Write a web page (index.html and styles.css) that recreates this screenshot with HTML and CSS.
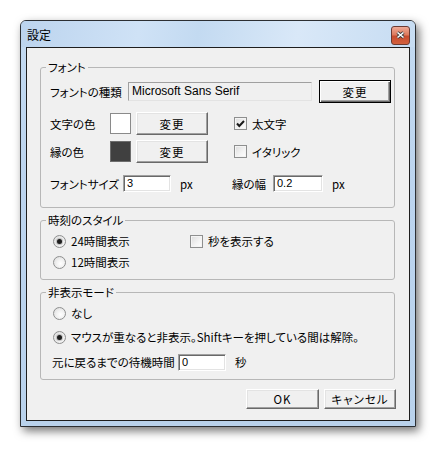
FILE: index.html
```html
<!DOCTYPE html>
<html lang="ja">
<head>
<meta charset="utf-8">
<title>設定</title>
<link rel="stylesheet" href="styles.css">
</head>
<body>
<div class="window">
  <div class="titlebar">
    <span class="title">設定</span>
    <div class="close">
      <svg width="9" height="8" viewBox="0 0 9 8"><path d="M1.5 1.5 L7.5 6.5 M7.5 1.5 L1.5 6.5" stroke="#3a3a3a" stroke-width="3.2" fill="none"/><path d="M1.5 1.5 L7.5 6.5 M7.5 1.5 L1.5 6.5" stroke="#fff" stroke-width="1.6" fill="none"/></svg>
    </div>
  </div>
  <div class="client">
    <fieldset class="group g1">
      <legend>フォント</legend>
      <div class="row r23">
        <span class="lbl w78">フォントの種類</span>
        <div class="textbox ro fontname">Microsoft Sans Serif</div>
        <div class="btn default w72 ml7">変更</div>
      </div>
      <div class="row r23 mt9">
        <div class="left w183">
          <span class="lbl w60">文字の色</span>
          <div class="swatch white"></div>
          <div class="btn w72 ml5">変更</div>
        </div>
        <span class="check on"><svg width="9" height="8" viewBox="0 0 9 8"><path d="M1 3.5 L3.3 6 L8 1" stroke="#1a1a1a" stroke-width="2" fill="none"/></svg></span>
        <span class="cap">太文字</span>
      </div>
      <div class="row r23 mt5">
        <div class="left w183">
          <span class="lbl w60">縁の色</span>
          <div class="swatch dark"></div>
          <div class="btn w72 ml5">変更</div>
        </div>
        <span class="check"></span>
        <span class="cap">イタリック</span>
      </div>
      <div class="row r23 mt9">
        <div class="left w182">
          <span class="lbl w73">フォントサイズ</span>
          <div class="textbox num w48">3</div>
          <span class="unit">px</span>
        </div>
        <span class="lbl w41">縁の幅</span>
        <div class="textbox num w50">0.2</div>
        <span class="unit">px</span>
      </div>
    </fieldset>

    <fieldset class="group g2">
      <legend>時刻のスタイル</legend>
      <div class="row r20">
        <div class="left w139">
          <span class="radio on"></span>
          <span class="cap">24時間表示</span>
        </div>
        <span class="check"></span>
        <span class="cap">秒を表示する</span>
      </div>
      <div class="row r20 mt1">
        <span class="radio"></span>
        <span class="cap">12時間表示</span>
      </div>
    </fieldset>

    <fieldset class="group g3">
      <legend>非表示モード</legend>
      <div class="row r20">
        <span class="radio"></span>
        <span class="cap">なし</span>
      </div>
      <div class="row r20 mt4">
        <span class="radio on"></span>
        <span class="cap">マウスが重なると非表示。Shiftキーを押している間は解除。</span>
      </div>
      <div class="row r20 mt5">
        <span class="lbl w128 pl2">元に戻るまでの待機時間</span>
        <div class="textbox num w48">0</div>
        <span class="unit">秒</span>
      </div>
    </fieldset>

    <div class="buttons">
      <div class="btn w73 h20">OK</div>
      <div class="btn w72 h20">キャンセル</div>
    </div>
  </div>
</div>
</body>
</html>
```

FILE: styles.css
```css
html, body {
  margin: 0;
  background: #ffffff;
}
body {
  padding: 20px;
  font-family: "Noto Sans CJK JP", "Noto Sans", sans-serif;
  font-feature-settings: "palt";
  font-size: 11.5px;
  line-height: 14px;
  color: #000;
}
.window {
  box-sizing: border-box;
  width: 396px;
  height: 407px;
  border: 1px solid #2c2f33;
  border-radius: 6px 6px 0 0;
  background: linear-gradient(to bottom, #c3daf1 0%, #bcd4ee 40%, #b9d2ec 100%);
  box-shadow: 3px 4px 10px rgba(0, 0, 0, 0.55);
  display: flex;
  flex-direction: column;
}
.titlebar {
  height: 26px;
  display: flex;
  align-items: center;
  padding-left: 6px;
  padding-right: 5px;
  background: linear-gradient(100deg, #bcd4ee 0%, #cfe2f6 30%, #c3daf1 45%, #d9e8f8 70%, #c6dcf2 100%);
  border-radius: 5px 5px 0 0;
}
.title {
  margin-top: 1px;
  font-size: 12px;
}
.close {
  margin-left: auto;
  margin-top: 2px;
  box-sizing: border-box;
  width: 19px;
  height: 19px;
  border: 1px solid #6b3b33;
  border-radius: 3px;
  background: linear-gradient(to bottom, #eeaa96 0%, #dd7b5e 45%, #c84c2e 55%, #d2613f 100%);
  display: flex;
  align-items: center;
  justify-content: center;
}
.client {
  flex: 1;
  margin: 0 5px 5px 5px;
  border: 1px solid #1e1e1e;
  background: #f0f0f0;
  padding: 12px 14px 0 13px;
  display: flex;
  flex-direction: column;
}
.group {
  margin: 0;
  border: 1px solid #b7b7b7;
  border-radius: 3px;
  padding: 4px 8px 7px 9px;
  min-width: 0;
}
.group legend {
  padding: 0 2px;
  margin-left: -4px;
  line-height: 14px;
}
.g1 {
  padding-top: 6px;
  padding-bottom: 12px;
}
.g2, .g3 {
  margin-top: 5px;
}
.row {
  display: flex;
  align-items: center;
}
.left {
  display: flex;
  align-items: center;
  flex: none;
}
.r23 { height: 23px; }
.r20 { height: 20px; }
.mt1 { margin-top: 1px; }
.mt4 { margin-top: 4px; }
.mt5 { margin-top: 5px; }
.mt9 { margin-top: 9px; }
.ml5 { margin-left: 5px; }
.ml7 { margin-left: 7px; }
.pl2 { padding-left: 2px; box-sizing: border-box; }
.w41 { width: 41px; }
.w48 { width: 48px; }
.w50 { width: 50px; }
.w60 { width: 60px; }
.w72 { width: 72px; }
.w73 { width: 73px; }
.w78 { width: 78px; }
.w128 { width: 128px; }
.w139 { width: 139px; }
.w182 { width: 182px; }
.w183 { width: 183px; }
.lbl { flex: none; white-space: nowrap; }
.cap { white-space: nowrap; }
.unit { margin-left: 9px; }
.btn {
  box-sizing: border-box;
  height: 23px;
  flex: none;
  display: flex;
  align-items: center;
  justify-content: center;
  background: #f0f0f0;
  border: 1px solid;
  border-color: #ffffff #696969 #696969 #ffffff;
  box-shadow: inset -1px -1px 0 #a0a0a0, inset 1px 1px 0 #e3e3e3;
  letter-spacing: 1px;
}
.btn.default {
  border-color: #000;
  box-shadow: inset 1px 1px 0 #ffffff, inset -1px -1px 0 #696969, inset -2px -2px 0 #a0a0a0;
}
.btn.h20 { height: 20px; }
.textbox {
  box-sizing: border-box;
  height: 17px;
  flex: none;
  background: #ffffff;
  border: 1px solid;
  border-color: #a0a0a0 #ffffff #ffffff #a0a0a0;
  box-shadow: inset 1px 1px 0 #696969, inset -1px -1px 0 #e3e3e3;
  padding: 0 3px;
  line-height: 15px;
  white-space: nowrap;
  overflow: hidden;
}
.textbox.ro {
  background: #f0f0f0;
}
.fontname {
  width: 184px;
  height: 19px;
  line-height: 17px;
  font-family: "Liberation Sans", Arial, sans-serif;
  font-size: 12px;
  border-color: #a0a0a0 #e3e3e3 #e3e3e3 #a0a0a0;
  box-shadow: none;
}
.num {
  font-family: "Liberation Sans", Arial, sans-serif;
  font-size: 11px;
}
.swatch {
  box-sizing: border-box;
  width: 21px;
  height: 21px;
  flex: none;
  border: 1px solid #8a8a8a;
}
.swatch.white { background: #ffffff; }
.swatch.dark { background: #404040; border-color: #6d6d6d; }
.check {
  box-sizing: border-box;
  width: 13px;
  height: 13px;
  flex: none;
  border: 1px solid #8e8f8f;
  background: linear-gradient(135deg, #dcdcdc 0%, #f4f4f4 60%, #ffffff 100%);
  box-shadow: inset 0 0 0 1px #f4f4f4;
  margin-left: 1px;
  margin-right: 5px;
  display: flex;
  align-items: center;
  justify-content: center;
}
.radio {
  box-sizing: border-box;
  width: 13px;
  height: 13px;
  flex: none;
  border: 1px solid #8e8f8f;
  border-radius: 50%;
  background: radial-gradient(circle at 60% 60%, #ffffff 0%, #f2f2f2 40%, #d8d8d8 100%);
  margin-left: 3px;
  margin-right: 5px;
  display: flex;
  align-items: center;
  justify-content: center;
}
.radio.on::after {
  content: "";
  width: 5px;
  height: 5px;
  border-radius: 50%;
  background: #1e1e1e;
  box-shadow: 0 0 1px 1px rgba(80, 80, 80, 0.35);
}
.buttons {
  display: flex;
  justify-content: flex-end;
  gap: 5px;
  margin-top: 9px;
  margin-right: -1px;
}
```
